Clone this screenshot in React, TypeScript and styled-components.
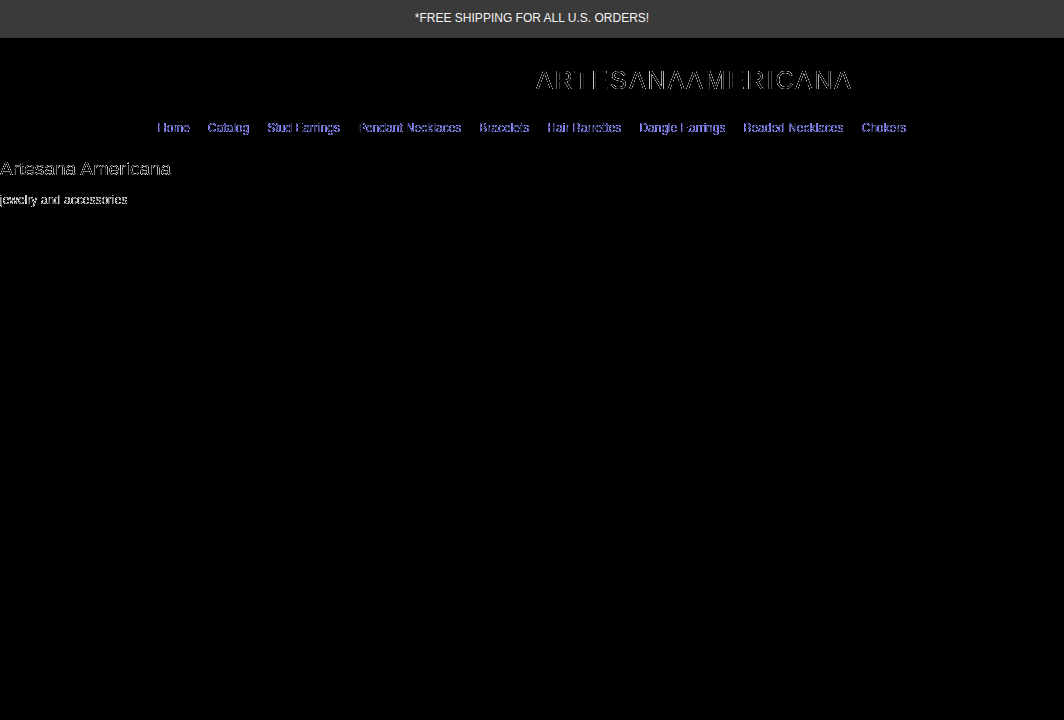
import React from 'react';
import styled, { createGlobalStyle } from 'styled-components';

const GlobalStyle = createGlobalStyle`
  * { box-sizing: border-box; }
  body {
    margin: 0;
    background: #000;
    color: #fff;
    font: 12px/18px "Liberation Sans", Arial, sans-serif;
  }
`;

const Announcement = styled.p`
  margin: 0;
  padding: 9px 16px 11px;
  background: #3a3a3a;
  color: #f4f4f4;
  text-align: center;
`;

// Keeps mainly the half-covered edge pixels of the glyphs, so text reads as a broken outline.
const etchedLarge = 'filter: url(#etched-large);';
const etchedSmall = 'filter: url(#etched-small);';

const Header = styled.header`
  display: grid;
  grid-template-columns: 1fr 1fr;
  padding: 27px 0 24px;
`;

const Brand = styled.a`
  grid-column: 2;
  padding-left: 4px;
  color: #ccc;
  font-size: 25px;
  line-height: 30px;
  letter-spacing: 2px;
  text-decoration: none;
  ${etchedLarge}
`;

const Nav = styled.nav`
  display: flex;
  flex-wrap: wrap;
  justify-content: center;
  gap: 18px;
  ${etchedSmall}
`;

const NavLink = styled.a`
  color: #8c8cff;
  text-decoration: none;
`;

const Intro = styled.main`
  padding-top: 20px;
`;

const Heading = styled.h1`
  margin: 0 0 10px;
  color: #ddd;
  font-size: 19px;
  font-weight: 400;
  line-height: 24px;
  ${etchedLarge}
`;

const Tagline = styled.p`
  margin: 0;
  color: #ddd;
  ${etchedSmall}
`;

const FilterDefs = styled.svg`
  position: absolute;
`;

const links = [
  'Home', 'Catalog', 'Stud Earrings', 'Pendant Necklaces', 'Bracelets',
  'Hair Barrettes', 'Dangle Earrings', 'Beaded Necklaces', 'Chokers',
];

export default function App() {
  return (
    <>
      <GlobalStyle />
      <FilterDefs width="0" height="0" aria-hidden="true">
        <filter id="etched-large" colorInterpolationFilters="sRGB">
          <feComponentTransfer>
            <feFuncA type="table" tableValues="0 1 0" />
          </feComponentTransfer>
        </filter>
        <filter id="etched-small" colorInterpolationFilters="sRGB">
          <feComponentTransfer>
            <feFuncA type="table" tableValues="0 1 0.9 0.1" />
          </feComponentTransfer>
        </filter>
      </FilterDefs>
      <Announcement>*FREE SHIPPING FOR ALL U.S. ORDERS!</Announcement>
      <Header>
        <Brand href="#">ARTESANAAMERICANA</Brand>
      </Header>
      <Nav aria-label="Main">
        {links.map((label) => <NavLink key={label} href="#">{label}</NavLink>)}
      </Nav>
      <Intro>
        <Heading>Artesana Americana</Heading>
        <Tagline>jewelry and accessories</Tagline>
      </Intro>
    </>
  );
}
